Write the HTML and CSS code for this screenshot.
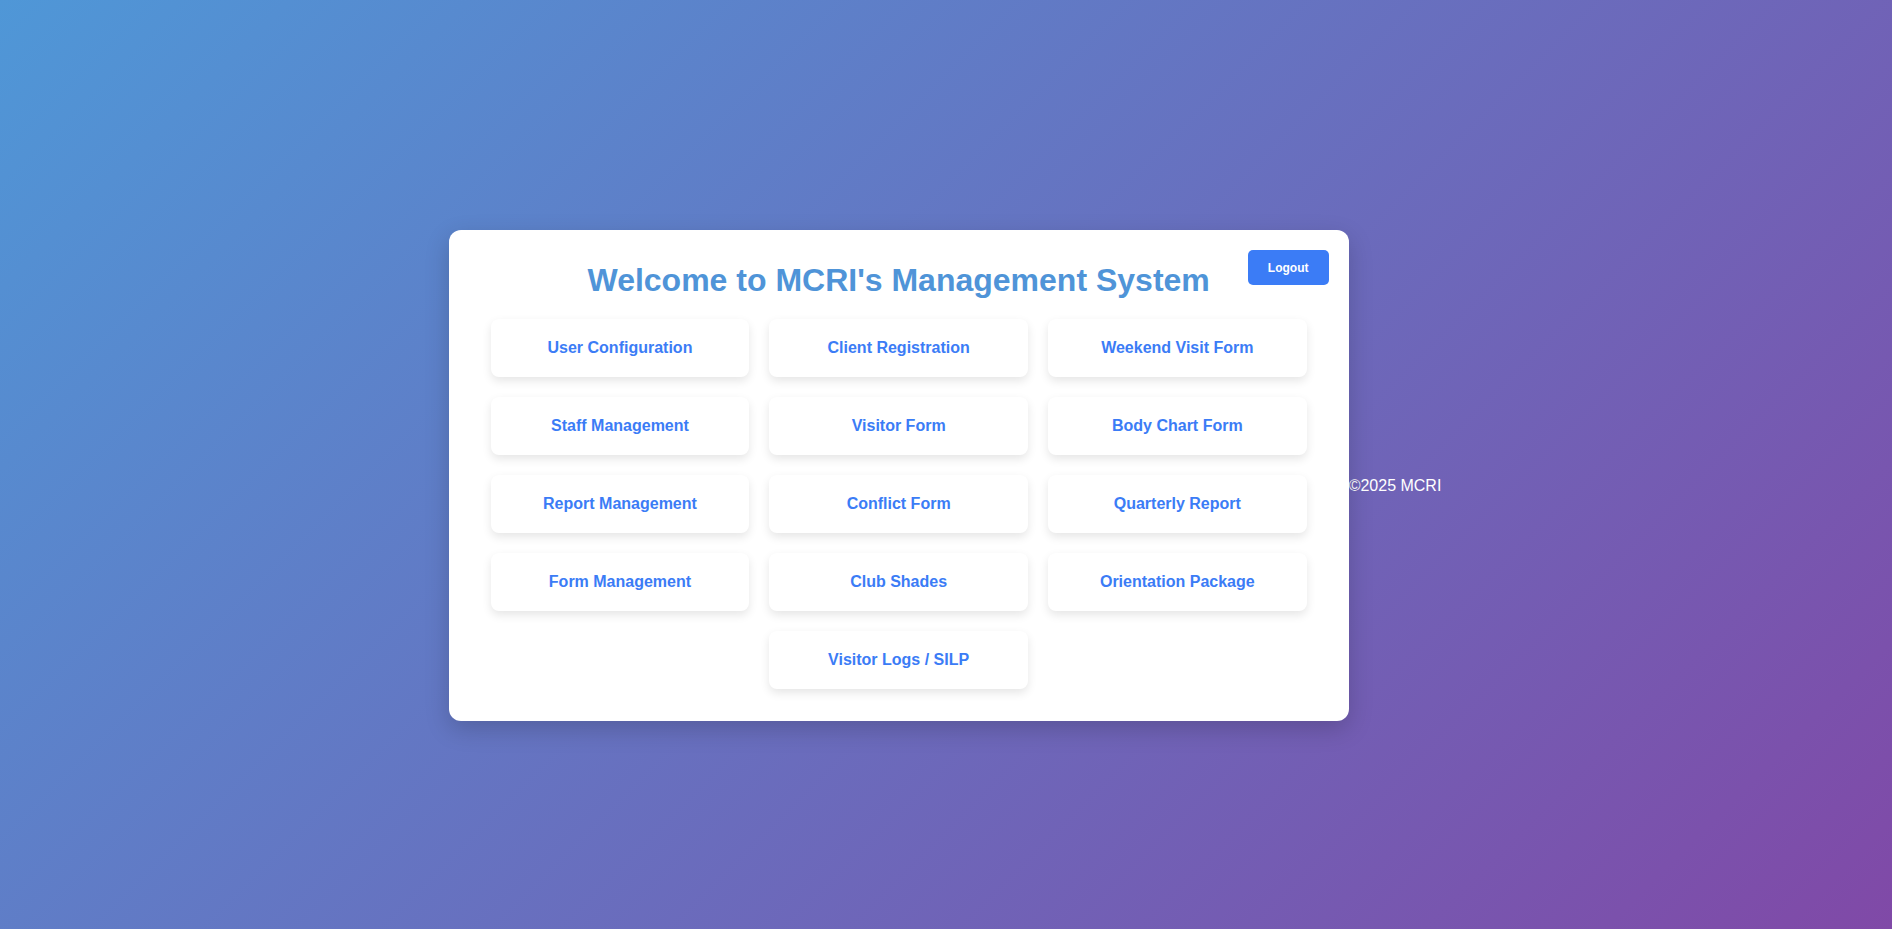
FILE: index.html
```html
<!DOCTYPE html>
<html lang="en">
<head>
<meta charset="utf-8">
<title>MCRI Management System</title>
<link rel="stylesheet" href="styles.css">
</head>
<body>
  <main class="dashboard">
    <button class="logout">Logout</button>
    <h1 class="title">Welcome to MCRI's Management System</h1>
    <nav class="menu">
      <a class="tile" href="#">User Configuration</a>
      <a class="tile" href="#">Client Registration</a>
      <a class="tile" href="#">Weekend Visit Form</a>
      <a class="tile" href="#">Staff Management</a>
      <a class="tile" href="#">Visitor Form</a>
      <a class="tile" href="#">Body Chart Form</a>
      <a class="tile" href="#">Report Management</a>
      <a class="tile" href="#">Conflict Form</a>
      <a class="tile" href="#">Quarterly Report</a>
      <a class="tile" href="#">Form Management</a>
      <a class="tile" href="#">Club Shades</a>
      <a class="tile" href="#">Orientation Package</a>
      <a class="tile tile-center" href="#">Visitor Logs / SILP</a>
    </nav>
  </main>
  <footer class="footer">©2025 MCRI</footer>
</body>
</html>
```

FILE: styles.css
```css
* { box-sizing: border-box; }

html, body { height: 100%; }

body {
  margin: 0;
  padding-top: 22px;
  min-height: 100vh;
  display: flex;
  align-items: center;
  justify-content: center;
  font-family: "Liberation Sans", Arial, sans-serif;
  background: linear-gradient(135deg, #4f97d7 0%, #8049a7 100%);
  overflow: hidden;
}

.dashboard {
  position: relative;
  width: 900px;
  background: #ffffff;
  border-radius: 12px;
  padding: 32px 42px;
  box-shadow: 0 8px 24px rgba(0, 0, 0, 0.18);
}

.logout {
  position: absolute;
  top: 20px;
  right: 20px;
  width: 81px;
  height: 35px;
  border: none;
  border-radius: 5px;
  background: #3b7cf6;
  color: #ffffff;
  font-family: "Liberation Sans", Arial, sans-serif;
  font-size: 12px;
  font-weight: bold;
  cursor: pointer;
}

.title {
  margin: 0 0 20px;
  text-align: center;
  font-size: 32px;
  font-weight: bold;
  color: #4f94d8;
}

.menu {
  display: grid;
  grid-template-columns: repeat(3, 1fr);
  gap: 20px;
}

.tile {
  height: 58px;
  display: flex;
  align-items: center;
  justify-content: center;
  background: #ffffff;
  border-radius: 8px;
  box-shadow: 0 4px 10px rgba(0, 0, 0, 0.1);
  color: #3b7cf6;
  font-size: 16px;
  font-weight: bold;
  text-decoration: none;
}

.tile-center { grid-column: 2; }

.footer {
  margin-top: 20px;
  padding-right: 2px;
  color: #ffffff;
  font-size: 16px;
}
```
